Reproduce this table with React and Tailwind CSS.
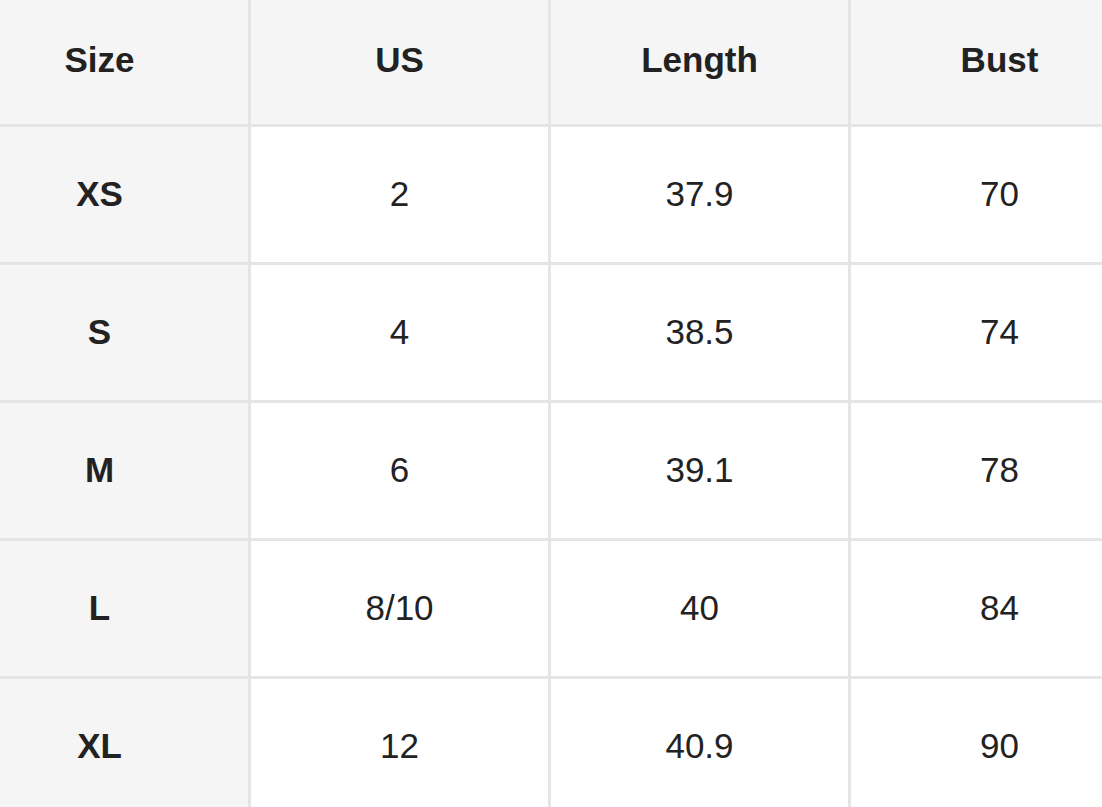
const HEAD = ["Size", "US", "Length", "Bust"];

const ROWS = [
  ["XS", "2", "37.9", "70"],
  ["S", "4", "38.5", "74"],
  ["M", "6", "39.1", "78"],
  ["L", "8/10", "40", "84"],
  ["XL", "12", "40.9", "90"],
];

export default function App() {
  return (
    <div className="h-screen w-full overflow-hidden bg-white">
      <div
        className="-ml-[49px] -mt-[3px] grid w-[1197px] grid-cols-[297px_297px_297px_297px] gap-[3px] bg-[#e5e5e5] text-[35px] text-[#222]"
        style={{ fontFamily: '"Liberation Sans", Arial, sans-serif' }}
      >
        {HEAD.map((h) => (
          <div
            key={h}
            className="flex h-[127px] items-center justify-center bg-[#f5f5f5] font-bold"
          >
            {h}
          </div>
        ))}
        {ROWS.map((row) =>
          row.map((cell, i) => (
            <div
              key={row[0] + i}
              className={
                i === 0
                  ? "flex h-[135px] items-center justify-center bg-[#f5f5f5] font-bold"
                  : "flex h-[135px] items-center justify-center bg-white"
              }
            >
              {cell}
            </div>
          ))
        )}
      </div>
    </div>
  );
}
